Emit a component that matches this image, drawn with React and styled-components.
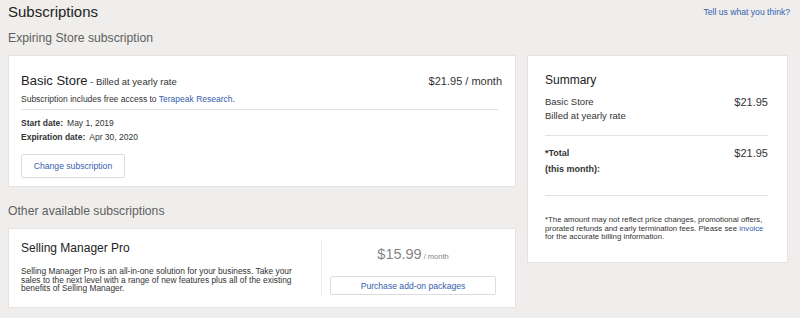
import React from "react";
import styled, { createGlobalStyle } from "styled-components";

const GlobalStyle = createGlobalStyle`
    html, body {
        margin: 0;
        padding: 0;
        background: #efeeec;
    }
    body {
        font-family: "Liberation Sans", Arial, sans-serif;
        color: #333;
    }
`

const Page = styled.div`
    width: 800px;
    height: 318px;
    box-sizing: border-box;
    padding: 0 10px 0 8px;
    overflow: hidden;
`

const TopBar = styled.div`
    display: flex;
    justify-content: space-between;
    align-items: center;
    height: 24px;
`

const Title = styled.h1`
    margin: 0;
    font-size: 15px;
    font-weight: normal;
    line-height: 24px;
    color: #222;
`

const Link = styled.a`
    color: #3560ad;
    text-decoration: none;
    font-size: ${p => p.size || "inherit"};
    cursor: pointer;
`

const InlineLink = styled(Link)`
    display: inline-block;
    line-height: inherit;
`

const Columns = styled.div`
    display: grid;
    grid-template-columns: 508px 261px;
    column-gap: 11px;
    align-items: start;
`

const SectionHeading = styled.h2`
    margin: ${p => p.top}px 0 7px;
    font-size: 12.2px;
    font-weight: normal;
    line-height: 20px;
    color: #606060;
`

const Card = styled.div`
    background: #fff;
    border: 1px solid #e4e3e1;
    box-sizing: border-box;
`

const StoreCard = styled(Card)`
    height: 132px;
    padding: 16px 17px 0 12px;
`

const StoreHeader = styled.div`
    display: flex;
    justify-content: space-between;
    align-items: baseline;
    line-height: 16px;
    margin-right: -4px;
`

const StoreName = styled.span`
    font-size: 13px;
    color: #222;
`

const BillingNote = styled.span`
    font-size: 9.5px;
`

const MonthlyPrice = styled.span`
    font-size: 11px;
    color: #333;
`

const SmallText = styled.div`
    font-size: 8.5px;
    line-height: 12px;
    margin-top: 3px;
`

const Divider = styled.hr`
    border: 0;
    border-top: 1px solid #e2e2e2;
    margin: ${p => p.top}px 0 0;
`

const DateRow = styled.div`
    font-size: 8.5px;
    line-height: 14px;
    margin-top: ${p => p.top || 0}px;

    b {
        margin-right: 4px;
    }
`

const OutlineButton = styled.button`
    display: flex;
    align-items: center;
    justify-content: center;
    box-sizing: border-box;
    width: ${p => p.width}px;
    height: 24px;
    margin-top: ${p => p.top || 0}px;
    padding: 0;
    background: #fff;
    border: 1px solid #dcdcdc;
    border-radius: 2px;
    font-family: inherit;
    font-size: 8.6px;
    color: #3560ad;
`

const OfferCard = styled(Card)`
    display: flex;
    height: 80px;
`

const OfferInfo = styled.div`
    width: 314px;
    box-sizing: border-box;
    padding: 11px 12px 0 12px;
    align-self: stretch;
`

const OfferName = styled.div`
    font-size: 12px;
    line-height: 16px;
    color: #222;
`

const OfferText = styled.p`
    margin: 11px 0 0;
    font-size: 8.4px;
    line-height: 8.6px;
`

const OfferAction = styled.div`
    flex: 1;
    margin: 11px 0 12px;
    padding: 6px 19px 0 8px;
    border-left: 1px solid #ececec;
    display: flex;
    flex-direction: column;
    align-items: center;
`

const BigPrice = styled.div`
    font-size: 14.5px;
    line-height: 16px;
    color: #858585;

    small {
        font-size: 7.5px;
        margin-left: 2px;
    }
`

const SummaryCard = styled(Card)`
    margin-top: 31px;
    height: 208px;
    padding: 16px 19px 0 17px;
`

const SummaryTitle = styled.div`
    font-size: 12px;
    line-height: 16px;
    color: #222;
`

const SummaryRow = styled.div`
    display: flex;
    justify-content: space-between;
    font-size: ${p => (p.bold ? "9px" : "9.5px")};
    font-weight: ${p => (p.bold ? "bold" : "normal")};
    line-height: ${p => p.lh || 14}px;
    margin-top: ${p => p.top || 0}px;
`

const Amount = styled.span`
    font-size: 11px;
    font-weight: normal;
`

const Footnote = styled.p`
    margin: 20px 0 0;
    font-size: 7.8px;
    line-height: 8.6px;
`

const App = () => {
    return (
        <>
            <GlobalStyle />
            <Page>
                <TopBar>
                    <Title>Subscriptions</Title>
                    <Link size="8.6px">Tell us what you think?</Link>
                </TopBar>
                <Columns>
                    <div>
                        <SectionHeading top={4}>Expiring Store subscription</SectionHeading>
                        <StoreCard>
                            <StoreHeader>
                                <span>
                                    <StoreName>Basic Store</StoreName>
                                    <BillingNote> - Billed at yearly rate</BillingNote>
                                </span>
                                <MonthlyPrice>$21.95 / month</MonthlyPrice>
                            </StoreHeader>
                            <SmallText>
                                Subscription includes free access to <Link>Terapeak Research</Link>.
                            </SmallText>
                            <Divider top={4} />
                            <DateRow top={6}><b>Start date:</b>May 1, 2019</DateRow>
                            <DateRow><b>Expiration date:</b>Apr 30, 2020</DateRow>
                            <OutlineButton width={104} top={10}>Change subscription</OutlineButton>
                        </StoreCard>

                        <SectionHeading top={14}>Other available subscriptions</SectionHeading>
                        <OfferCard>
                            <OfferInfo>
                                <OfferName>Selling Manager Pro</OfferName>
                                <OfferText>
                                    Selling Manager Pro is an all-in-one solution for your business. Take your
                                    sales to the next level with a range of new features plus all of the existing
                                    benefits of Selling Manager.
                                </OfferText>
                            </OfferInfo>
                            <OfferAction>
                                <BigPrice>$15.99<small>/ month</small></BigPrice>
                                <OutlineButton width={166} top={11}>Purchase add-on packages</OutlineButton>
                            </OfferAction>
                        </OfferCard>
                    </div>

                    <SummaryCard>
                        <SummaryTitle>Summary</SummaryTitle>
                        <SummaryRow top={7}>
                            <span>Basic Store</span>
                            <Amount>$21.95</Amount>
                        </SummaryRow>
                        <SummaryRow>
                            <span>Billed at yearly rate</span>
                        </SummaryRow>
                        <Divider top={12} />
                        <SummaryRow bold lh={16} top={9}>
                            <span>*Total</span>
                            <Amount>$21.95</Amount>
                        </SummaryRow>
                        <SummaryRow bold lh={16}>
                            <span>(this month):</span>
                        </SummaryRow>
                        <Divider top={18} />
                        <Footnote>
                            *The amount may not reflect price changes, promotional offers,
                            prorated refunds and early termination fees. Please see <InlineLink>invoice</InlineLink> for
                            the accurate billing information.
                        </Footnote>
                    </SummaryCard>
                </Columns>
            </Page>
        </>
    )
}

export default App;
